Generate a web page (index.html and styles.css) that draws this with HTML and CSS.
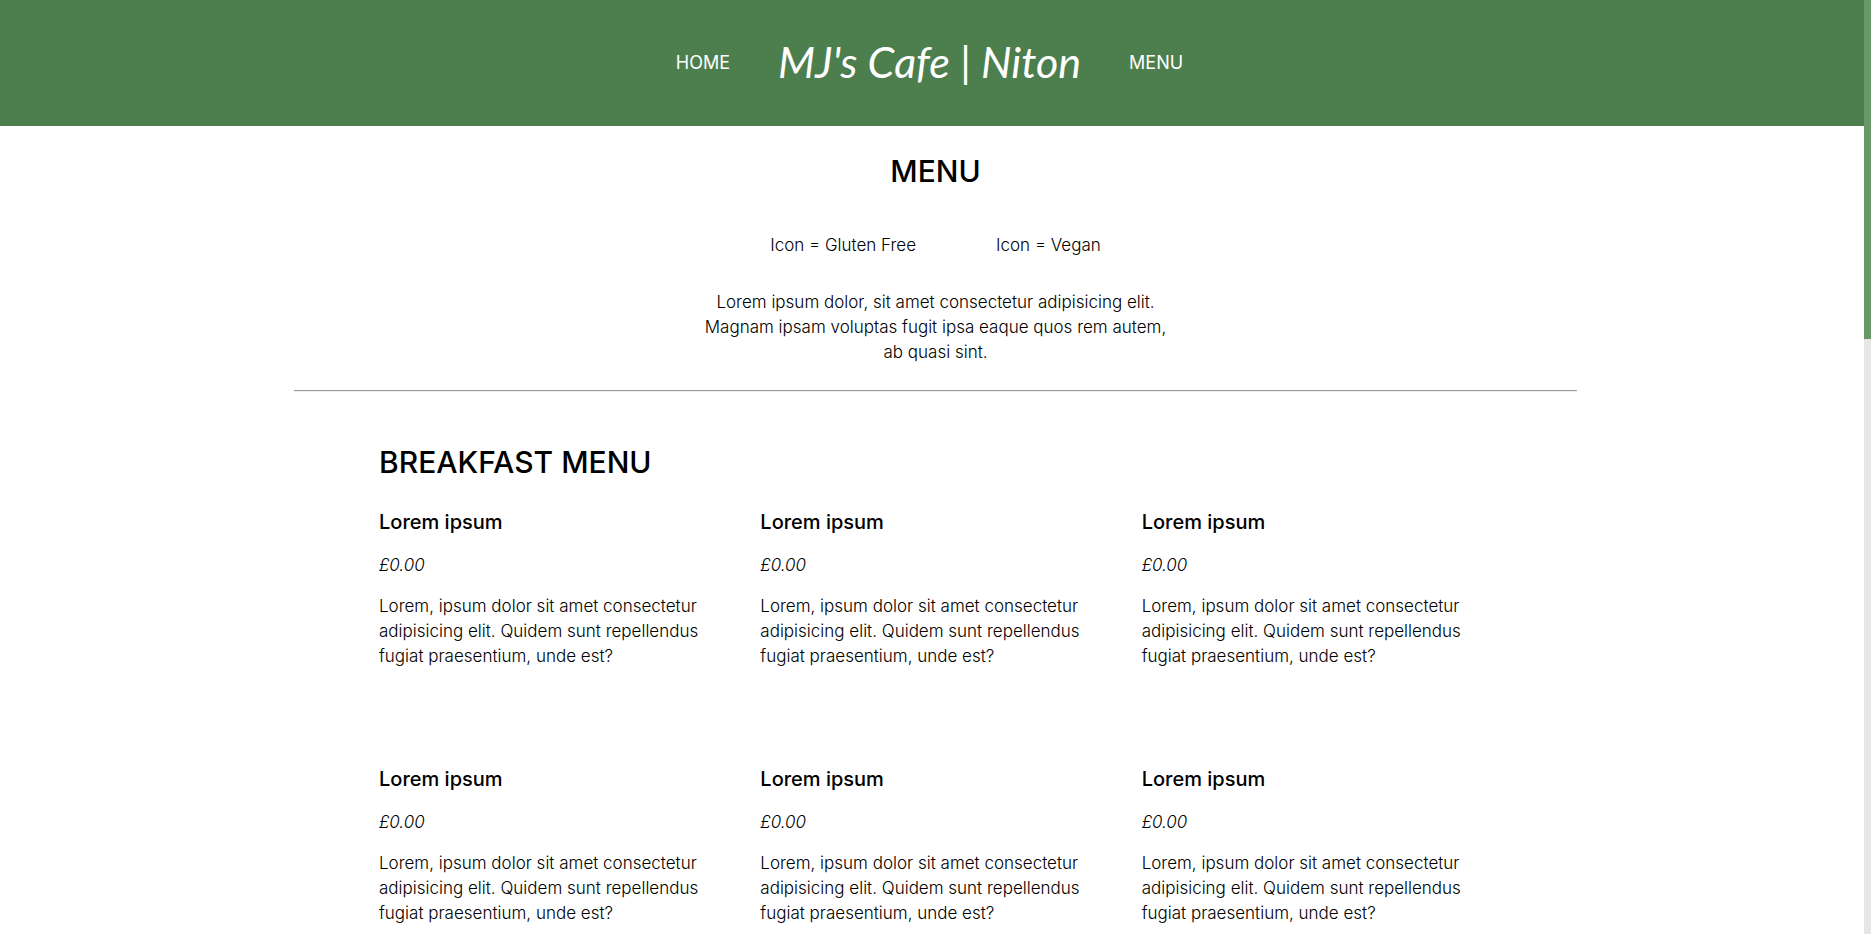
FILE: index.html
```html
<!DOCTYPE html>
<html lang="en">
<head>
  <meta charset="utf-8">
  <meta name="viewport" content="width=device-width, initial-scale=1">
  <title>MJ's Cafe | Niton</title>
  <link rel="stylesheet" href="styles.css">
</head>
<body>
  <header class="site-header">
    <nav class="site-nav">
      <a class="nav-link" href="#home">HOME</a>
      <a class="logo" href="#home">MJ's Cafe | Niton</a>
      <a class="nav-link" href="#menu">MENU</a>
    </nav>
  </header>
  <main class="page" id="menu">
    <section class="intro">
      <h1 class="title">MENU</h1>
      <div class="legend">
        <p>Icon = Gluten Free</p>
        <p>Icon = Vegan</p>
      </div>
      <p class="intro-text">Lorem ipsum dolor, sit amet consectetur adipisicing elit. Magnam ipsam voluptas fugit ipsa eaque quos rem autem, ab quasi sint.</p>
    </section>
    <hr class="rule">
    <section class="menu-section">
      <h2 class="title">BREAKFAST MENU</h2>
      <div class="menu-grid">
        <article class="item">
          <h3 class="item-name">Lorem ipsum</h3>
          <p class="price">£0.00</p>
          <p>Lorem, ipsum dolor sit amet consectetur adipisicing elit. Quidem sunt repellendus fugiat praesentium, unde est?</p>
        </article>
        <article class="item">
          <h3 class="item-name">Lorem ipsum</h3>
          <p class="price">£0.00</p>
          <p>Lorem, ipsum dolor sit amet consectetur adipisicing elit. Quidem sunt repellendus fugiat praesentium, unde est?</p>
        </article>
        <article class="item">
          <h3 class="item-name">Lorem ipsum</h3>
          <p class="price">£0.00</p>
          <p>Lorem, ipsum dolor sit amet consectetur adipisicing elit. Quidem sunt repellendus fugiat praesentium, unde est?</p>
        </article>
        <article class="item">
          <h3 class="item-name">Lorem ipsum</h3>
          <p class="price">£0.00</p>
          <p>Lorem, ipsum dolor sit amet consectetur adipisicing elit. Quidem sunt repellendus fugiat praesentium, unde est?</p>
        </article>
        <article class="item">
          <h3 class="item-name">Lorem ipsum</h3>
          <p class="price">£0.00</p>
          <p>Lorem, ipsum dolor sit amet consectetur adipisicing elit. Quidem sunt repellendus fugiat praesentium, unde est?</p>
        </article>
        <article class="item">
          <h3 class="item-name">Lorem ipsum</h3>
          <p class="price">£0.00</p>
          <p>Lorem, ipsum dolor sit amet consectetur adipisicing elit. Quidem sunt repellendus fugiat praesentium, unde est?</p>
        </article>
      </div>
    </section>
  </main>
  <div class="scroll-track" aria-hidden="true"><div class="scroll-thumb"></div></div>
</body>
</html>
```

FILE: styles.css
```css
* {
  box-sizing: border-box;
  margin: 0;
  padding: 0;
}

body {
  background: #fff;
  color: #000;
  font-family: Inter, "Open Sans", sans-serif;
  font-size: 17px;
  font-weight: 300;
  line-height: 25px;
}

.site-header {
  background: #4d7e4d;
  padding: 31px 12px 33px 0;
}

.site-nav {
  display: flex;
  justify-content: center;
  align-items: center;
  gap: 48px;
}

.nav-link {
  color: #fff;
  font-size: 18px;
  font-weight: 400;
  text-decoration: none;
}

.logo {
  color: #fff;
  font-family: Lato, sans-serif;
  font-size: 43px;
  font-style: italic;
  font-weight: 400;
  line-height: 62px;
  text-decoration: none;
}

.page {
  width: 1283px;
  max-width: 100%;
  margin: 0 auto;
}

.title {
  font-size: 30px;
  font-weight: 500;
  line-height: 50px;
}

.intro {
  display: flex;
  flex-direction: column;
  align-items: center;
  padding-top: 20px;
  text-align: center;
}

.legend {
  display: flex;
  gap: 80px;
  padding: 37px 0 32px;
}

.intro-text {
  max-width: 480px;
}

.rule {
  margin-top: 25px;
  border: 0;
  border-top: 1px solid #9a9a9a;
  border-bottom: 1px solid #eee;
}

.menu-section {
  padding: 45px 85px 0;
}

.menu-grid {
  display: grid;
  grid-template-columns: repeat(3, 1fr);
  gap: 95px 31px;
  padding-top: 20px;
}

.item {
  display: grid;
  gap: 16px;
}

.item-name {
  font-size: 20px;
  font-weight: 500;
  line-height: 30px;
}

.price {
  font-style: italic;
}

.scroll-track {
  position: fixed;
  top: 0;
  right: 0;
  bottom: 0;
  width: 7px;
  background: #e6e6e6;
}

.scroll-thumb {
  height: 36.3%;
  background: #689868;
}
```
